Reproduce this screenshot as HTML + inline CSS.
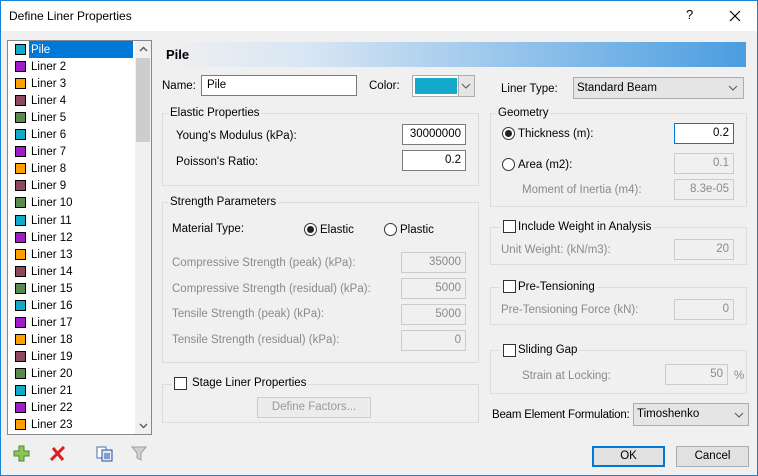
<!DOCTYPE html>
<html><head><style>
*{box-sizing:border-box;margin:0;padding:0}
body{width:758px;height:476px;overflow:hidden;background:#f0f0f0;font-family:"Liberation Sans",sans-serif;font-size:11.5px;color:#000;position:relative}
.a{position:absolute}
.win{left:0;top:0;width:758px;height:476px;border:1px solid #1883d7}
.title{left:1px;top:1px;width:756px;height:30px;background:#fff}
.t{position:absolute;white-space:nowrap;line-height:14px}
.in{position:absolute;background:#fff;border:1px solid #7a7a7a;text-align:right;padding-right:4px;line-height:18px;height:21px}
.dis{background:#f0f0f0;border-color:#ccc;color:#8a8a8a}
.g{color:#8a8a8a}
.grp{position:absolute;border:1px solid #dcdcdc}
.gt{position:absolute;background:#f0f0f0;padding:0 2px;line-height:14px;white-space:nowrap}
.rb{position:absolute;width:13px;height:13px;border:1px solid #333;border-radius:50%;background:#fff}
.cb{position:absolute;width:13px;height:13px;border:1px solid #333;background:#fff}
.sw{position:absolute;left:9px;width:11px;height:11px;border:1px solid #000}
.li{position:absolute;left:31px;line-height:14px}
.combo{position:absolute;background:#e5e5e5;border:1px solid #adadad;padding-left:3px;line-height:20px}
.btn{position:absolute;background:#e1e1e1;border:1px solid #adadad;text-align:center;line-height:18px}
</style></head><body>
<div class="a win"></div>
<div class="a title"></div>
<div class="t" style="left:9px;top:9px;font-size:12px">Define Liner Properties</div>
<div class="t" style="left:686px;top:8px;font-size:13px">?</div>
<svg class="a" style="left:729px;top:10px" width="12" height="12"><path d="M1 1L11 11M11 1L1 11" stroke="#000" stroke-width="1.2"/></svg>

<div class="a" style="left:7px;top:40px;width:145px;height:395px;background:#fff;border:1px solid #828790"></div>
<div class="a" style="left:135px;top:41px;width:16px;height:393px;background:#f0f0f0"></div>
<div class="a" style="left:136px;top:58px;width:14px;height:84px;background:#cdcdcd"></div>
<svg class="a" style="left:139px;top:46px" width="9" height="6"><path d="M1 5L4.5 1.5L8 5" stroke="#606060" stroke-width="1.5" fill="none"/></svg>
<svg class="a" style="left:139px;top:423px" width="9" height="6"><path d="M1 1L4.5 4.5L8 1" stroke="#606060" stroke-width="1.5" fill="none"/></svg>
<div class="a" style="left:29px;top:41px;width:104px;height:17px;background:#0078d7"></div>
<div id="list"></div>
<script>
var c=["#13a9c9","#a01cc8","#ff9f00","#8b4a5c","#5a8a50"];var h="";
for(var i=0;i<23;i++){var y=41+i*17.05;h+='<div class="sw" style="left:15px;top:'+(y+3)+'px;background:'+c[i%5]+'"></div><div class="li" style="top:'+(y+2)+'px;'+(i==0?'color:#fff':'')+'">'+(i==0?'Pile':'Liner '+(i+1))+'</div>';}
document.getElementById('list').innerHTML=h;
</script>
<svg class="a" style="left:13px;top:445px" width="18" height="18"><path d="M6 1H11V6H16V11H11V16H6V11H1V6H6Z" fill="#8cc65a" stroke="#4b8a2c"/></svg>
<svg class="a" style="left:49px;top:446px" width="18" height="16"><path d="M2 14L15 1M4 2L14 14" stroke="#d82020" stroke-width="3"/></svg>
<svg class="a" style="left:96px;top:446px" width="18" height="16"><rect x="1" y="1" width="9" height="11" fill="#fff" stroke="#4070b0"/><rect x="6" y="4" width="10" height="11" fill="#dfeaf8" stroke="#2050a0"/><path d="M8 8h6M8 10h6M8 12h6" stroke="#2050a0"/></svg>
<svg class="a" style="left:131px;top:446px" width="16" height="16"><path d="M1 1H15L10 7V14L6 12V7Z" fill="#d0d0d0" stroke="#a0a0a0"/></svg>

<div class="a" style="left:162px;top:42px;width:584px;height:25px;background:linear-gradient(to right,#f0f0f0,#d8e6f4 25%,#4a9de0)"></div>
<div class="t" style="left:166px;top:48px;font-weight:bold;font-size:13px">Pile</div>

<div class="t" style="left:162px;top:79px">Name:</div>
<div class="in" style="left:201px;top:75px;width:156px;text-align:left;padding-left:5px">Pile</div>
<div class="t" style="left:369px;top:79px">Color:</div>
<div class="a" style="left:412px;top:75px;width:63px;height:22px;border:1px solid #adadad;background:#fff"></div>
<div class="a" style="left:415px;top:78px;width:42px;height:16px;background:#13a9c9"></div>
<div class="a" style="left:458px;top:76px;width:16px;height:20px;background:#e5e5e5;border-left:1px solid #adadad"></div>
<svg class="a" style="left:461px;top:83px" width="10" height="6"><path d="M1 1L5 5L9 1" stroke="#555" fill="none"/></svg>

<div class="grp" style="left:162px;top:113px;width:317px;height:73px"></div>
<div class="gt" style="left:168px;top:106px">Elastic Properties</div>
<div class="t" style="left:176px;top:129px">Young's Modulus (kPa):</div>
<div class="in" style="left:402px;top:124px;width:64px">30000000</div>
<div class="t" style="left:176px;top:155px">Poisson's Ratio:</div>
<div class="in" style="left:402px;top:150px;width:64px">0.2</div>

<div class="grp" style="left:162px;top:202px;width:317px;height:161px"></div>
<div class="gt" style="left:168px;top:195px">Strength Parameters</div>
<div class="t" style="left:172px;top:222px">Material Type:</div>
<div class="rb" style="left:304px;top:223px"></div><div class="a" style="left:307px;top:226px;width:7px;height:7px;border-radius:50%;background:#222"></div>
<div class="t" style="left:320px;top:223px">Elastic</div>
<div class="rb" style="left:384px;top:223px"></div>
<div class="t" style="left:400px;top:223px">Plastic</div>
<div class="t g" style="left:172px;top:256px">Compressive Strength (peak) (kPa):</div>
<div class="in dis" style="left:401px;top:252px;width:65px">35000</div>
<div class="t g" style="left:172px;top:282px">Compressive Strength (residual) (kPa):</div>
<div class="in dis" style="left:401px;top:278px;width:65px">5000</div>
<div class="t g" style="left:172px;top:307px">Tensile Strength (peak) (kPa):</div>
<div class="in dis" style="left:401px;top:304px;width:65px">5000</div>
<div class="t g" style="left:172px;top:333px">Tensile Strength (residual) (kPa):</div>
<div class="in dis" style="left:401px;top:330px;width:65px">0</div>

<div class="grp" style="left:162px;top:384px;width:317px;height:39px"></div>
<div class="gt" style="left:172px;top:376px;padding-left:20px">Stage Liner Properties</div>
<div class="cb" style="left:174px;top:377px"></div>
<div class="btn" style="left:257px;top:397px;width:114px;height:21px;color:#999;border-color:#ccc;background:#ececec">Define Factors...</div>

<div class="t" style="left:501px;top:82px">Liner Type:</div>
<div class="combo" style="left:573px;top:77px;width:171px;height:22px">Standard Beam</div>
<svg class="a" style="left:728px;top:85px" width="10" height="6"><path d="M1 1L5 5L9 1" stroke="#555" fill="none"/></svg>

<div class="grp" style="left:490px;top:113px;width:257px;height:94px"></div>
<div class="gt" style="left:496px;top:106px">Geometry</div>
<div class="rb" style="left:502px;top:127px"></div><div class="a" style="left:505px;top:130px;width:7px;height:7px;border-radius:50%;background:#222"></div>
<div class="t" style="left:518px;top:127px">Thickness (m):</div>
<div class="in" style="left:674px;top:123px;width:60px;border:1px solid #0078d7">0.2</div>
<div class="rb" style="left:502px;top:158px"></div>
<div class="t" style="left:518px;top:158px">Area (m2):</div>
<div class="in dis" style="left:674px;top:153px;width:60px">0.1</div>
<div class="t g" style="left:522px;top:183px">Moment of Inertia (m4):</div>
<div class="in dis" style="left:674px;top:179px;width:60px">8.3e-05</div>

<div class="grp" style="left:490px;top:227px;width:257px;height:38px"></div>
<div class="gt" style="left:500px;top:220px;padding-left:18px">Include Weight in Analysis</div>
<div class="cb" style="left:503px;top:220px"></div>
<div class="t g" style="left:501px;top:243px">Unit Weight: (kN/m3):</div>
<div class="in dis" style="left:674px;top:239px;width:60px">20</div>

<div class="grp" style="left:490px;top:287px;width:257px;height:38px"></div>
<div class="gt" style="left:500px;top:280px;padding-left:18px">Pre-Tensioning</div>
<div class="cb" style="left:503px;top:280px"></div>
<div class="t g" style="left:501px;top:303px">Pre-Tensioning Force (kN):</div>
<div class="in dis" style="left:674px;top:299px;width:60px">0</div>

<div class="grp" style="left:490px;top:350px;width:257px;height:44px"></div>
<div class="gt" style="left:500px;top:343px;padding-left:18px">Sliding Gap</div>
<div class="cb" style="left:503px;top:344px"></div>
<div class="t g" style="left:522px;top:369px">Strain at Locking:</div>
<div class="in dis" style="left:665px;top:364px;width:63px">50</div>
<div class="t g" style="left:734px;top:369px">%</div>

<div class="t" style="left:492px;top:408px;letter-spacing:-0.2px">Beam Element Formulation:</div>
<div class="combo" style="left:633px;top:403px;width:116px;height:23px;line-height:21px">Timoshenko</div>
<svg class="a" style="left:734px;top:412px" width="10" height="6"><path d="M1 1L5 5L9 1" stroke="#555" fill="none"/></svg>

<div class="btn" style="left:592px;top:446px;width:73px;height:21px;border:2px solid #0078d7;line-height:17px">OK</div>
<div class="btn" style="left:676px;top:446px;width:73px;height:21px">Cancel</div>
</body></html>
